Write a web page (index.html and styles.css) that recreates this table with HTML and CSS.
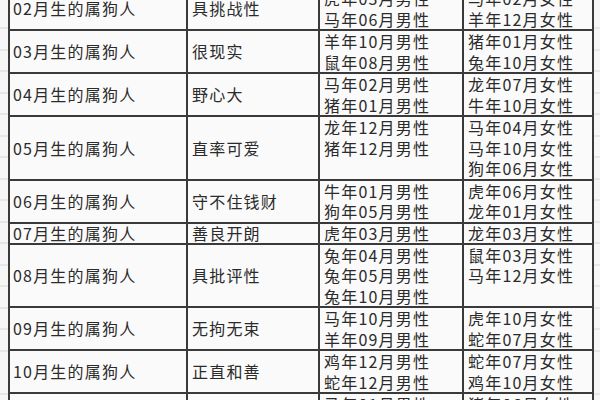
FILE: index.html
```html
<!DOCTYPE html>
<html lang="zh-CN">
<head>
<meta charset="utf-8">
<title>属狗人</title>
<link rel="stylesheet" href="styles.css">
</head>
<body>
<table class="sheet">
  <colgroup>
    <col class="c-name"><col class="c-trait"><col class="c-male"><col class="c-female">
  </colgroup>
  <tbody>
    <tr>
      <td class="name">02月生的属狗人</td><td class="trait">具挑战性</td>
      <td class="list"><div>虎年03月男性</div><div>马年06月男性</div></td>
      <td class="list"><div>马年02月女性</div><div>羊年12月女性</div></td>
    </tr>
    <tr>
      <td class="name">03月生的属狗人</td><td class="trait">很现实</td>
      <td class="list"><div>羊年10月男性</div><div>鼠年08月男性</div></td>
      <td class="list"><div>猪年01月女性</div><div>兔年10月女性</div></td>
    </tr>
    <tr>
      <td class="name">04月生的属狗人</td><td class="trait">野心大</td>
      <td class="list"><div>马年02月男性</div><div>猪年01月男性</div></td>
      <td class="list"><div>龙年07月女性</div><div>牛年10月女性</div></td>
    </tr>
    <tr>
      <td class="name">05月生的属狗人</td><td class="trait">直率可爱</td>
      <td class="list"><div>龙年12月男性</div><div>猪年12月男性</div><div>&nbsp;</div></td>
      <td class="list"><div>马年04月女性</div><div>马年10月女性</div><div>狗年06月女性</div></td>
    </tr>
    <tr>
      <td class="name">06月生的属狗人</td><td class="trait">守不住钱财</td>
      <td class="list"><div>牛年01月男性</div><div>狗年05月男性</div></td>
      <td class="list"><div>虎年06月女性</div><div>龙年01月女性</div></td>
    </tr>
    <tr class="single">
      <td class="name">07月生的属狗人</td><td class="trait">善良开朗</td>
      <td class="list"><div>虎年03月男性</div></td>
      <td class="list"><div>龙年03月女性</div></td>
    </tr>
    <tr>
      <td class="name">08月生的属狗人</td><td class="trait">具批评性</td>
      <td class="list"><div>兔年04月男性</div><div>兔年05月男性</div><div>兔年10月男性</div></td>
      <td class="list"><div>鼠年03月女性</div><div>马年12月女性</div><div>&nbsp;</div></td>
    </tr>
    <tr>
      <td class="name">09月生的属狗人</td><td class="trait">无拘无束</td>
      <td class="list"><div>马年10月男性</div><div>羊年09月男性</div></td>
      <td class="list"><div>虎年10月女性</div><div>蛇年07月女性</div></td>
    </tr>
    <tr>
      <td class="name">10月生的属狗人</td><td class="trait">正直和善</td>
      <td class="list"><div>鸡年12月男性</div><div>蛇年12月男性</div></td>
      <td class="list"><div>蛇年07月女性</div><div>鸡年10月女性</div></td>
    </tr>
    <tr>
      <td class="name">11月生的属狗人</td><td class="trait">善于交际</td>
      <td class="list"><div>马年01月男性</div><div>兔年06月男性</div></td>
      <td class="list"><div>猪年06月女性</div><div>虎年05月女性</div></td>
    </tr>
  </tbody>
</table>
</body>
</html>
```
FILE: styles.css
```css
html {
  background-color: #f6f6f6;
  background-image: repeating-linear-gradient(to bottom, transparent 0, transparent 20.5px, #d6d6d6 20.5px, #d6d6d6 21.5px);
  background-position: 0 7.5px;
}
body {
  margin: 0;
  padding: 0 8px;
  overflow: hidden;
  height: 400px;
  font-family: "Noto Sans CJK SC", "Noto Sans", sans-serif;
  font-size: 16px;
  letter-spacing: 1.2px;
  color: #2b2b2b;
}
.sheet {
  margin-top: -14px;
  width: 584px;
  table-layout: fixed;
  border-collapse: collapse;
  background: #fafafa;
}
.c-name { width: 178px; }
.c-trait { width: 132px; }
.c-male { width: 144px; }
.c-female { width: 130px; }
.sheet td {
  border: 2px solid #3a3a3a;
  padding: 0 3px;
  line-height: 20.5px;
  white-space: nowrap;
  overflow: hidden;
}
.sheet td.name,
.sheet td.trait {
  vertical-align: middle;
}
.sheet td.trait {
  padding-left: 4px;
}
.sheet td.list {
  vertical-align: top;
  padding-left: 4px;
}
.single td {
  line-height: 19px;
}
```
